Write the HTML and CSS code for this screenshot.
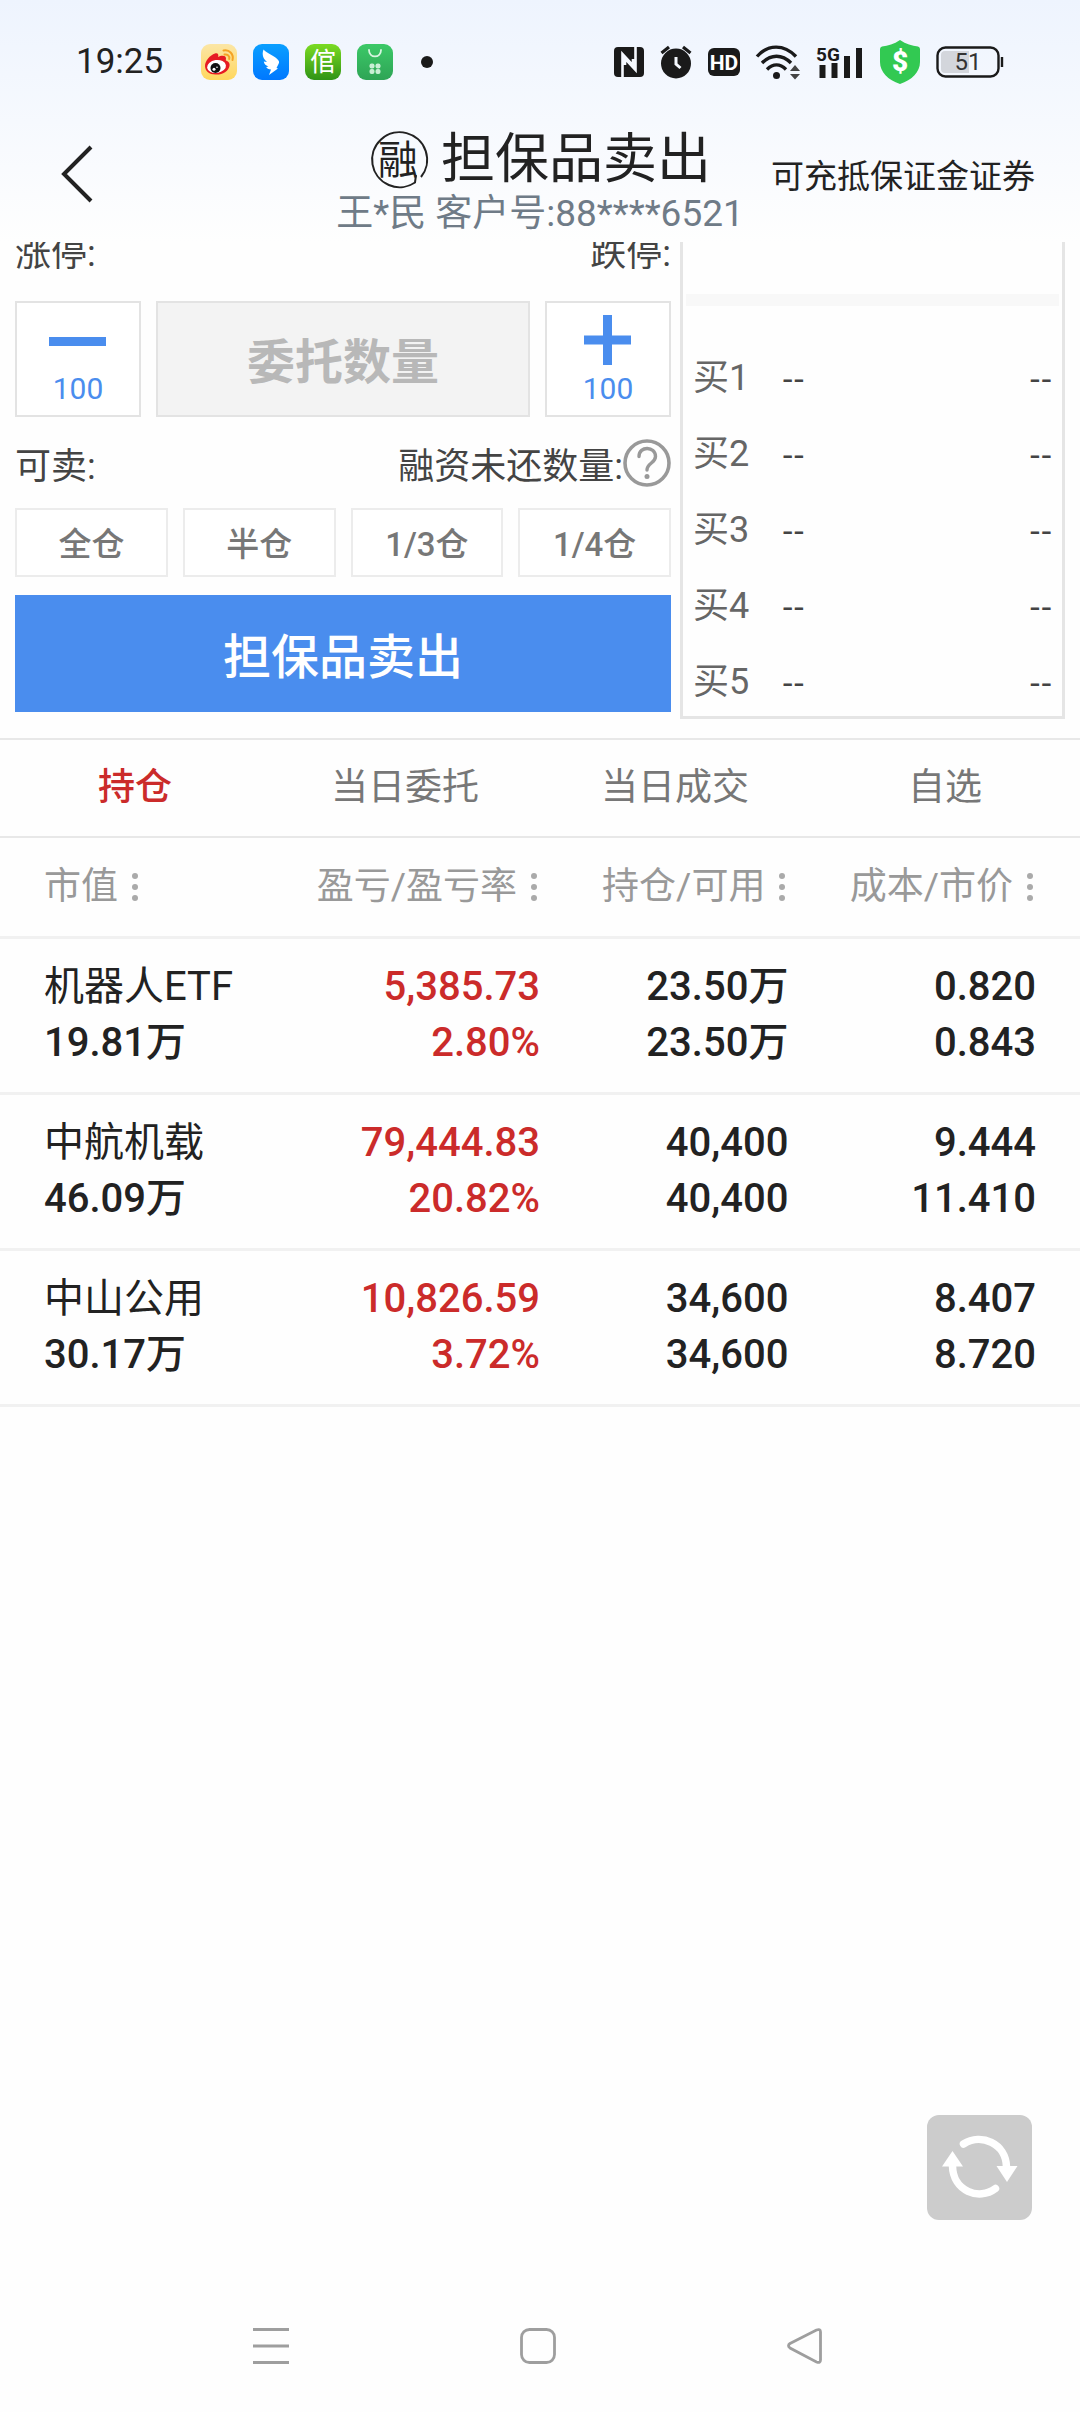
FILE: index.html
```html
<!DOCTYPE html>
<html lang="zh-CN">
<head>
<meta charset="utf-8">
<meta name="viewport" content="width=device-width">
<title>担保品卖出</title>
<link rel="stylesheet" href="styles.css">
</head>
<body>
<div class="page">
  <div class="top">
    <div class="status">
      <span class="clock">19:25</span>
      <div class="apps">
        <svg width="36" height="36" viewBox="0 0 36 36">
          <defs>
            <linearGradient id="gw" x1="0" y1="0" x2="0" y2="1"><stop offset="0" stop-color="#fbe6a6"/><stop offset="1" stop-color="#ffd75e"/></linearGradient>
            <linearGradient id="gb" x1="0" y1="0" x2="0" y2="1"><stop offset="0" stop-color="#0a9fff"/><stop offset="1" stop-color="#0078ff"/></linearGradient>
            <linearGradient id="gg" x1="0" y1="0" x2="0" y2="1"><stop offset="0" stop-color="#7bdb22"/><stop offset="1" stop-color="#2f9316"/></linearGradient>
            <linearGradient id="gs" x1="0" y1="0" x2="0" y2="1"><stop offset="0" stop-color="#3cc968"/><stop offset="1" stop-color="#2ea455"/></linearGradient>
          </defs>
          <rect width="36" height="36" rx="9" fill="url(#gw)"/>
          <path d="M4 22C4 17 9 11 14 9.500C17 8.500 18 11 17 13C20 11.500 25 11 25 14.500C25 15.500 24.500 16 25 16.500C28 17.500 29 19.500 28.500 22C27.500 27.500 21 31 14.500 30.500C8.500 30.500 4 27 4 22Z" fill="#e61b23"/>
          <ellipse cx="15.500" cy="22.500" rx="9.500" ry="6.500" fill="#fff" transform="rotate(-8 15.500 22.500)"/>
          <circle cx="14.500" cy="24" r="5" fill="#111"/><circle cx="13" cy="25.200" r="1.500" fill="#fff"/><circle cx="16" cy="23.200" r="0.800" fill="#fff"/>
          <path d="M22.500 6.500C28 5 33 10 31.500 16M23.500 10.500C26.500 10 29 12 28.200 15" fill="none" stroke="#f5a324" stroke-width="2" stroke-linecap="round"/>
        </svg>
        <svg width="36" height="36" viewBox="0 0 36 36">
          <rect width="36" height="36" rx="9" fill="url(#gb)"/>
          <path d="M10.500 5.500C14 9.500 22 11.500 25.500 16.500C26.500 18 26 19 25.500 20L23.500 24L25 24.500L16 31L18 25.500C15.500 25.500 14 24.500 13.200 23L15.500 22.500C12.500 21.500 11 19.500 10.800 17.500L14 18C10.500 15 8.500 11 10.500 5.500Z" fill="#fff"/>
        </svg>
        <svg width="36" height="36" viewBox="0 0 36 36">
          <rect width="36" height="36" rx="9" fill="url(#gg)"/>
          <text x="18" y="27" text-anchor="middle" class="app-char">倌</text>
        </svg>
        <svg width="36" height="36" viewBox="0 0 36 36">
          <rect width="36" height="36" rx="9" fill="url(#gs)"/>
          <path d="M12 6C12 14.500 24 14.500 24 6" fill="none" stroke="#d8f5e1" stroke-width="1.800" stroke-linecap="round"/>
          <g fill="#c9efd5"><rect x="12.500" y="19.500" width="5" height="5" rx="2"/><rect x="18.500" y="19.500" width="5" height="5" rx="2"/><rect x="12.500" y="25" width="5" height="5" rx="2"/><rect x="18.500" y="25" width="5" height="5" rx="2"/></g>
        </svg>
      </div>
      <span class="more-dot"></span>
      <div class="signals">
        <svg width="30" height="30" viewBox="0 0 30 30">
          <rect width="30" height="30" rx="4" fill="#1a1a1a"/>
          <path d="M8.500 30V7L19 18.500V12M21.500 0V23L11 11.500V18" fill="none" stroke="#f5f9ff" stroke-width="2.600"/>
        </svg>
        <svg width="32" height="34" viewBox="0 0 32 34">
          <circle cx="16" cy="18.500" r="15" fill="#1a1a1a"/>
          <path d="M1.500 8L9 2M30.500 8L23 2" stroke="#1a1a1a" stroke-width="3.200"/>
          <path d="M16 12V19L20.500 23" fill="none" stroke="#f5f9ff" stroke-width="3"/>
        </svg>
        <svg width="32" height="28" viewBox="0 0 32 28">
          <rect width="32" height="28" rx="6" fill="#1a1a1a"/>
          <text x="16" y="22" text-anchor="middle" class="hd">HD</text>
        </svg>
        <svg width="44" height="34" viewBox="0 0 44 34">
          <g fill="none" stroke="#1a1a1a" stroke-width="3.400"><path d="M1 11.500C12 -1 28 -1 40 11.500"/><path d="M6 18C15 9 26 9 35 18"/><path d="M11 24.500C17 18.500 24 18.500 30 24.500"/></g>
          <circle cx="20.500" cy="30.500" r="3.500" fill="#1a1a1a"/>
          <path d="M34 26H44L39 20ZM34 29H44L39 34.500Z" fill="#444"/>
        </svg>
        <svg width="48" height="34" viewBox="0 0 48 34">
          <text x="0" y="16" class="net">5G</text>
          <path d="M6.500 33V20M18.500 33V18M31 33V11M43 33V3" stroke="#1a1a1a" stroke-width="6"/>
        </svg>
        <svg width="40" height="44" viewBox="0 0 40 44">
          <path d="M20 0C26 4 32 6 38 6.500Q40 7 40 9V22C40 32 32 40 20 44C8 40 0 32 0 22V9Q0 7 2 6.500C8 6 14 4 20 0Z" fill="#32c952"/>
          <text x="20" y="31" text-anchor="middle" class="dollar">$</text>
        </svg>
        <svg width="68" height="32" viewBox="0 0 68 32">
          <rect x="1.500" y="1.500" width="61" height="29" rx="8" fill="none" stroke="#1a1a1a" stroke-width="2.400"/>
          <path d="M9 5H33V27H9Q5 27 5 23V9Q5 5 9 5Z" fill="#d3d6dc"/>
          <path d="M66 11V21" stroke="#1a1a1a" stroke-width="2.400"/>
          <text x="32" y="24" text-anchor="middle" class="charge">51</text>
        </svg>
      </div>
    </div>
    <header class="header">
      <button class="back" aria-label="返回">
        <svg width="32" height="58" viewBox="0 0 32 58"><path d="M30 2L3 29L30 56" fill="none" stroke="#222" stroke-width="4"/></svg>
      </button>
      <div class="heading">
        <div class="title-line">
          <svg width="58" height="58" viewBox="0 0 58 58">
            <path d="M52 46A27.500 27.500 0 1 0 46 51.500L47 44" fill="none" stroke="#222" stroke-width="2"/>
            <text x="29" y="43" text-anchor="middle" class="badge">融</text>
          </svg>
          <h1 class="title">担保品卖出</h1>
        </div>
        <p class="client">王*民 客户号:88****6521</p>
      </div>
      <a class="securities" href="#">可充抵保证金证券</a>
    </header>
  </div>

  <main class="main">
    <section class="trade">
      <form class="order">
        <div class="limits"><span>涨停:</span><span>跌停:</span></div>
        <div class="quantity">
          <button type="button" class="step" aria-label="减少100">
            <svg width="58" height="50" viewBox="0 0 58 50"><path d="M0 26.500H57" stroke="#4a8dee" stroke-width="9"/></svg>
            <span>100</span>
          </button>
          <input class="amount" type="text" placeholder="委托数量" aria-label="委托数量">
          <button type="button" class="step" aria-label="增加100">
            <svg width="58" height="50" viewBox="0 0 58 50"><path d="M5 25H52M28.500 0V50" stroke="#4a8dee" stroke-width="9"/></svg>
            <span>100</span>
          </button>
        </div>
        <div class="available">
          <span>可卖:</span>
          <span class="unpaid">融资未还数量:<button type="button" class="help" aria-label="说明">
            <svg width="48" height="48" viewBox="0 0 48 48"><circle cx="24" cy="24" r="22" fill="none" stroke="#999" stroke-width="3.600"/><path d="M16 17.500C16 6.500 32.500 7 32.500 17.500C32.500 24 24 24 24 31" fill="none" stroke="#999" stroke-width="3.400" stroke-linecap="round"/><circle cx="24" cy="37.500" r="2.500" fill="#999"/></svg>
          </button></span>
        </div>
        <div class="portions">
          <button type="button" class="portion">全仓</button>
          <button type="button" class="portion">半仓</button>
          <button type="button" class="portion">1/3仓</button>
          <button type="button" class="portion">1/4仓</button>
        </div>
        <button type="button" class="submit">担保品卖出</button>
      </form>
      <div class="book">
        <div class="band"></div>
        <ul class="bids">
          <li class="bid"><span class="level">买1</span><span class="quote">--</span><span class="quote">--</span></li>
          <li class="bid"><span class="level">买2</span><span class="quote">--</span><span class="quote">--</span></li>
          <li class="bid"><span class="level">买3</span><span class="quote">--</span><span class="quote">--</span></li>
          <li class="bid"><span class="level">买4</span><span class="quote">--</span><span class="quote">--</span></li>
          <li class="bid"><span class="level">买5</span><span class="quote">--</span><span class="quote">--</span></li>
        </ul>
      </div>
    </section>

    <nav class="tabs">
      <a class="tab active" href="#">持仓</a>
      <a class="tab" href="#">当日委托</a>
      <a class="tab" href="#">当日成交</a>
      <a class="tab" href="#">自选</a>
    </nav>

    <table class="holdings">
      <colgroup><col class="c-name"><col class="c-profit"><col class="c-held"><col class="c-price"></colgroup>
      <thead>
        <tr>
          <th><button class="sort">市值<svg width="8" height="30" viewBox="0 0 8 30"><g fill="#aaa"><circle cx="4" cy="4" r="3"/><circle cx="4" cy="15" r="3"/><circle cx="4" cy="26" r="3"/></g></svg></button></th>
          <th><button class="sort">盈亏/盈亏率<svg width="8" height="30" viewBox="0 0 8 30"><g fill="#aaa"><circle cx="4" cy="4" r="3"/><circle cx="4" cy="15" r="3"/><circle cx="4" cy="26" r="3"/></g></svg></button></th>
          <th><button class="sort">持仓/可用<svg width="8" height="30" viewBox="0 0 8 30"><g fill="#aaa"><circle cx="4" cy="4" r="3"/><circle cx="4" cy="15" r="3"/><circle cx="4" cy="26" r="3"/></g></svg></button></th>
          <th><button class="sort">成本/市价<svg width="8" height="30" viewBox="0 0 8 30"><g fill="#aaa"><circle cx="4" cy="4" r="3"/><circle cx="4" cy="15" r="3"/><circle cx="4" cy="26" r="3"/></g></svg></button></th>
        </tr>
      </thead>
      <tbody>
        <tr><td><span class="name">机器人ETF</span><br>19.81万</td><td class="gain">5,385.73<br>2.80%</td><td>23.50万<br>23.50万</td><td>0.820<br>0.843</td></tr>
        <tr><td><span class="name">中航机载</span><br>46.09万</td><td class="gain">79,444.83<br>20.82%</td><td>40,400<br>40,400</td><td>9.444<br>11.410</td></tr>
        <tr><td><span class="name">中山公用</span><br>30.17万</td><td class="gain">10,826.59<br>3.72%</td><td>34,600<br>34,600</td><td>8.407<br>8.720</td></tr>
      </tbody>
    </table>
  </main>

  <button class="refresh" aria-label="刷新">
    <svg width="105" height="105" viewBox="0 0 105 105">
      <g fill="none" stroke="#fff" stroke-width="7.500" stroke-linecap="round"><path d="M36.500 29C54 18 79 28 79.500 52"/><path d="M68.500 73.500C52 86 26 76 25.500 51"/></g>
      <path d="M69.500 51H90.500L80 67ZM15 51.500H36L25.500 36Z" fill="#fff"/>
    </svg>
  </button>

  <nav class="system">
    <button class="key" aria-label="最近任务"><svg width="36" height="36" viewBox="0 0 36 36"><path d="M0 1.500H36M0 18H36M0 34.500H36" stroke="#9e9e9e" stroke-width="3"/></svg></button>
    <button class="key" aria-label="主屏幕"><svg width="36" height="36" viewBox="0 0 36 36"><rect x="1.500" y="1.500" width="33" height="33" rx="8" fill="none" stroke="#9e9e9e" stroke-width="2.800"/></svg></button>
    <button class="key" aria-label="后退"><svg width="36" height="36" viewBox="0 0 36 36"><path d="M3 15.500L29.500 2Q33.500 0.500 33.500 4V32Q33.500 35.500 29.500 34L3 20Q0 17.700 3 15.500Z" fill="none" stroke="#9e9e9e" stroke-width="2.800"/></svg></button>
  </nav>
</div>
</body>
</html>
```

FILE: styles.css
```css
* {
  box-sizing: border-box;
}

body {
  margin: 0;
  background: #fefefe;
  color: #222;
  font-family: Roboto, "Noto Sans CJK SC", sans-serif;
  font-size: 36px;
}

svg {
  display: block;
  flex: none;
  overflow: visible;
}

button {
  margin: 0;
  padding: 0;
  border: 0;
  background: none;
  color: inherit;
  font: inherit;
}

a {
  color: inherit;
  text-decoration: none;
}

.page {
  position: relative;
  display: flex;
  flex-direction: column;
  min-height: 100vh;
}

.top {
  background: linear-gradient(#eef4fe, #fefefe);
}

/* status bar */
.status {
  display: flex;
  align-items: center;
  height: 124px;
  padding: 0 76px;
}

.clock {
  width: 125px;
  font-size: 35px;
  line-height: 36px;
}

.apps {
  display: flex;
  gap: 16px;
}

.more-dot {
  width: 12px;
  height: 12px;
  margin-left: 28px;
  border-radius: 50%;
  background: #1a1a1a;
}

.signals {
  display: flex;
  align-items: center;
  gap: 16px;
  margin-left: auto;
}

.app-char {
  fill: #fff;
  font-size: 26px;
}

.hd {
  fill: #fff;
  font-size: 21px;
  font-weight: 700;
}

.net {
  fill: #1a1a1a;
  font-size: 19px;
  font-weight: 700;
}

.dollar {
  fill: #fff;
  font-size: 28px;
  font-weight: 900;
}

.charge {
  fill: #333;
  font-size: 24px;
}

/* title bar */
.header {
  display: grid;
  grid-template-columns: 1fr auto 1fr;
  align-items: center;
  height: 118px;
  padding: 0 45px;
}

.back {
  justify-self: start;
  padding: 0 16px 18px;
}

.heading {
  padding-top: 2px;
  text-align: center;
}

.title-line {
  display: flex;
  align-items: center;
  justify-content: center;
  gap: 14px;
}

.badge {
  fill: #222;
  font-size: 40px;
}

.title {
  margin: 0;
  font-size: 54px;
  font-weight: 400;
  line-height: 60px;
}

.client {
  margin: 0;
  color: #6f7b87;
  font-size: 37px;
  line-height: 48px;
}

.securities {
  justify-self: end;
  padding-bottom: 13px;
  font-size: 33px;
  line-height: 40px;
  white-space: nowrap;
}

/* order form and bid list */
.main {
  flex: 1;
}

.trade {
  display: grid;
  grid-template-columns: minmax(0, 656fr) minmax(0, 385fr);
  gap: 9px;
  padding: 0 15px 19px;
  overflow: hidden;
  color: #444;
}

.limits {
  display: flex;
  justify-content: space-between;
  margin: -6px 0 29px;
  line-height: 36px;
}

.quantity {
  display: flex;
  gap: 15px;
  height: 116px;
}

.step {
  display: flex;
  flex: none;
  flex-direction: column;
  align-items: center;
  width: 126px;
  padding-top: 12px;
  border: 2px solid #e3e3e3;
  background: #fff;
  color: #4a8dee;
  font-size: 30px;
  line-height: 48px;
}

.amount {
  flex: 1;
  min-width: 0;
  padding: 6px 0 0;
  border: 2px solid #e3e3e3;
  border-radius: 0;
  background: #f3f3f3;
  color: #444;
  font: 700 48px Roboto, "Noto Sans CJK SC", sans-serif;
  text-align: center;
}

.amount::placeholder {
  color: #b8b8b8;
}

.available {
  display: flex;
  align-items: center;
  justify-content: space-between;
  height: 91px;
}

.unpaid {
  display: flex;
  align-items: center;
}

.portions {
  display: grid;
  grid-template-columns: repeat(4, 1fr);
  gap: 15px;
}

.portion {
  height: 69px;
  padding-bottom: 2px;
  border: 2px solid #ececec;
  background: #fff;
  color: #777;
  font-size: 33px;
  font-weight: 500;
}

.submit {
  display: block;
  width: 100%;
  height: 117px;
  margin-top: 18px;
  padding-bottom: 2px;
  background: #4a8dee;
  color: #fff;
  font-size: 48px;
  font-weight: 500;
}

.book {
  border: 3px solid #e5e5e5;
  border-top: 0;
}

.band {
  height: 12px;
  margin: 52px 3px 42px;
  background: #f8f8f8;
}

.bids {
  display: flex;
  flex-direction: column;
  gap: 16px;
  margin: 0;
  padding: 0 10px 4px;
  list-style: none;
}

.bid {
  display: flex;
  line-height: 60px;
}

.level {
  width: 89px;
  color: #666;
}

.quote {
  font-family: "Liberation Sans", sans-serif;
  font-size: 34px;
}

.quote:last-child {
  margin-left: auto;
}

/* tabs */
.tabs {
  display: grid;
  grid-template-columns: repeat(4, 1fr);
  border: solid #e8e8e8;
  border-width: 2px 0;
}

.tab {
  color: #777;
  font-size: 37px;
  line-height: 96px;
  text-align: center;
}

.active {
  color: #cb2b2a;
  font-weight: 500;
}

/* holdings */
.holdings {
  width: 100%;
  border-collapse: collapse;
  table-layout: fixed;
}

.c-name,
.c-profit {
  width: 25%;
}

.c-held {
  width: 23%;
}

.holdings th,
.holdings td {
  padding: 0;
  border-bottom: 3px solid #f1f1f1;
  text-align: right;
}

.holdings th:first-child,
.holdings td:first-child {
  padding-left: 44px;
  text-align: left;
}

.holdings th:last-child,
.holdings td:last-child {
  padding-right: 44px;
}

.sort {
  display: inline-flex;
  align-items: center;
  gap: 13px;
  padding-right: 2px;
  color: #999;
  font-size: 37px;
  font-weight: 400;
  line-height: 98px;
  vertical-align: top;
}

.holdings td {
  padding: 20px 0 21px;
  font-size: 40px;
  font-weight: 500;
  line-height: 56px;
}

.name {
  font-weight: 400;
}

.gain {
  color: #cb2b2a;
}

/* floating refresh and system keys */
.refresh {
  position: absolute;
  right: 48px;
  bottom: 192px;
  border-radius: 12px;
  background: #ccc;
}

.system {
  display: grid;
  grid-template-columns: repeat(3, 1fr);
  padding: 48px 141px 48px 137px;
}

.key {
  justify-self: center;
}
```
